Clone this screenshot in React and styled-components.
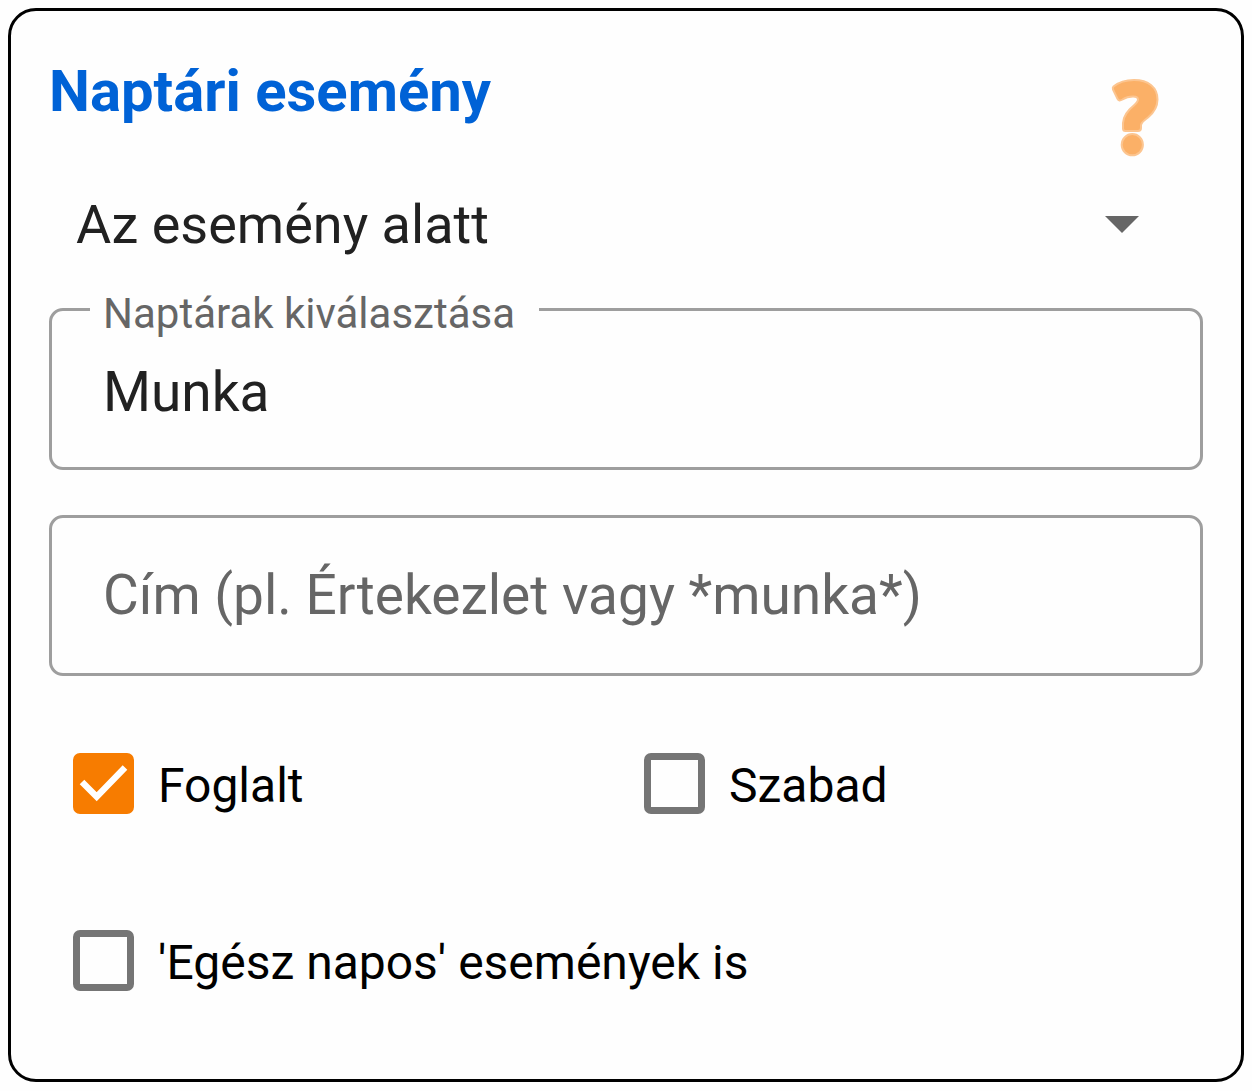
import React, { useState } from "react";
import styled, { createGlobalStyle } from "styled-components";

export default function App() {
	const [when, setWhen] = useState("during");
	const [title, setTitle] = useState("");
	const [checks, setChecks] = useState({
		busy: true,
		free: false,
		allDay: false,
	});

	const toggle = (event) => {
		setChecks({ ...checks, [event.target.name]: event.target.checked });
	};

	return (
		<>
			<GlobalStyle />
			<Card>
				<Header>
					<h1>Naptári esemény</h1>
					<HelpButton type='button' aria-label='Súgó'>
						<HelpIcon />
					</HelpButton>
				</Header>
				<SelectRow>
					<select
						aria-label='Naptári esemény'
						value={when}
						onChange={(event) => setWhen(event.target.value)}>
						<option value='during'>Az esemény alatt</option>
					</select>
					<svg width='34' height='17' viewBox='0 0 34 17' aria-hidden='true'>
						<path d='M0 0h34L17 17z' fill='#666' />
					</svg>
				</SelectRow>
				<Outlined>
					<legend>
						<label htmlFor='calendars'>Naptárak kiválasztása</label>
					</legend>
					<TextInput id='calendars' value='Munka' readOnly />
				</Outlined>
				<TitleField>
					<TextInput
						aria-label='Cím'
						placeholder='Cím (pl. Értekezlet vagy *munka*)'
						value={title}
						onChange={(event) => setTitle(event.target.value)}
					/>
				</TitleField>
				<Options>
					<Option>
						<Checkbox name='busy' checked={checks.busy} onChange={toggle} />
						Foglalt
					</Option>
					<Option>
						<Checkbox name='free' checked={checks.free} onChange={toggle} />
						Szabad
					</Option>
					<Option $wide>
						<Checkbox name='allDay' checked={checks.allDay} onChange={toggle} />
						'Egész napos' események is
					</Option>
				</Options>
			</Card>
		</>
	);
}

function Checkbox({ name, checked, onChange }) {
	return (
		<CheckBoxWrap>
			<input type='checkbox' name={name} checked={checked} onChange={onChange} />
			{checked && (
				<svg viewBox='0 0 61 61' aria-hidden='true'>
					<path
						d='M9 29 23.700 43.800 52 14.500'
						fill='none'
						stroke='#fff'
						strokeWidth='6.4'
					/>
				</svg>
			)}
		</CheckBoxWrap>
	);
}

function HelpIcon() {
	return (
		<svg width='48' height='80' viewBox='0 0 48 80' aria-hidden='true'>
			<g fill='#fbb067' stroke='#fcc590' strokeWidth='2' strokeLinejoin='round'>
				<path d='M2.500 9.500C8 5 14 3 23 3 37.500 3 46.500 10.500 46.500 22.500C46.500 30 43 35.500 37 40.500 32 44 30 46 30 48.500V51C30 53 29.500 54 27 54H14.500C12.500 54 12 53 12 51.500C11.500 43 13 38.500 18.500 32.500 23.500 27.500 27 26 27 22.500C27 20 25 19.500 22 19.500 18 19.500 14.500 20.500 11.500 22.500 9 24 7.500 23.800 6.500 21.800L2 12.500C1.500 11 1.500 10.500 2.500 9.500Z' />
				<circle cx='21.300' cy='67.700' r='10.600' />
			</g>
		</svg>
	);
}

const GlobalStyle = createGlobalStyle`
	* {
		box-sizing: border-box;
	}

	body {
		margin: 8px;
		background-color: #fefefe;
		font-family: Roboto, "Noto Sans", sans-serif;
	}

	button,
	input,
	select {
		font-family: inherit;
	}
`;

const Card = styled.main`
	display: flex;
	flex-direction: column;
	padding: 46px 38px 83px;
	border: 3px solid #000;
	border-radius: 28px;
`;

const Header = styled.header`
	display: flex;
	justify-content: space-between;
	align-items: flex-start;

	h1 {
		margin: 0;
		color: #0062d6;
		font-size: 58px;
		font-weight: 700;
		line-height: 68px;
	}
`;

const HelpButton = styled.button`
	display: flex;
	margin: 20px 44px 0 0;
	padding: 0;
	border: none;
	background: none;
	cursor: pointer;
`;

const SelectRow = styled.div`
	display: grid;
	align-items: center;
	margin-top: 35px;

	select {
		grid-area: 1 / 1;
		width: 100%;
		height: 64px;
		padding: 0 100px 0 27px;
		border: none;
		appearance: none;
		background: none;
		color: #212121;
		font-size: 54px;
	}

	svg {
		grid-area: 1 / 1;
		justify-self: end;
		margin-right: 64px;
		pointer-events: none;
	}
`;

const Outlined = styled.fieldset`
	min-width: 0;
	margin: 28px 0 0;
	padding: 26px 38px 43px;
	border: 3px solid #9e9e9e;
	border-radius: 14px;

	legend {
		padding: 10px 24px 0 13px;
		color: #666;
		font-size: 42px;
		line-height: 40px;
	}

	input {
		padding: 0 13px;
	}
`;

const TitleField = styled.div`
	margin-top: 45px;
	padding: 45px 51px 46px;
	border: 3px solid #9e9e9e;
	border-radius: 14px;
`;

const TextInput = styled.input`
	display: block;
	width: 100%;
	height: 64px;
	padding: 0;
	border: none;
	outline: none;
	background: none;
	color: #212121;
	font-size: 55px;

	&::placeholder {
		color: #666;
		opacity: 1;
	}
`;

const Options = styled.div`
	display: grid;
	grid-template-columns: 1fr 1fr;
	row-gap: 111px;
	margin: 77px 12px 0 0;
`;

const Option = styled.label`
	display: flex;
	align-items: flex-start;
	gap: 24px;
	grid-column: ${({ $wide }) => ($wide ? "1 / -1" : "auto")};
	padding-left: 24px;
	color: #000;
	font-size: 48px;
	line-height: 66px;
	cursor: pointer;
`;

const CheckBoxWrap = styled.span`
	display: grid;
	flex: none;
	width: 61px;
	height: 61px;

	input {
		grid-area: 1 / 1;
		width: 61px;
		height: 61px;
		margin: 0;
		border: 7px solid #757575;
		border-radius: 7px;
		appearance: none;
		cursor: pointer;
	}

	input:checked {
		border-color: #f77c00;
		background-color: #f77c00;
	}

	svg {
		grid-area: 1 / 1;
		pointer-events: none;
	}
`;
